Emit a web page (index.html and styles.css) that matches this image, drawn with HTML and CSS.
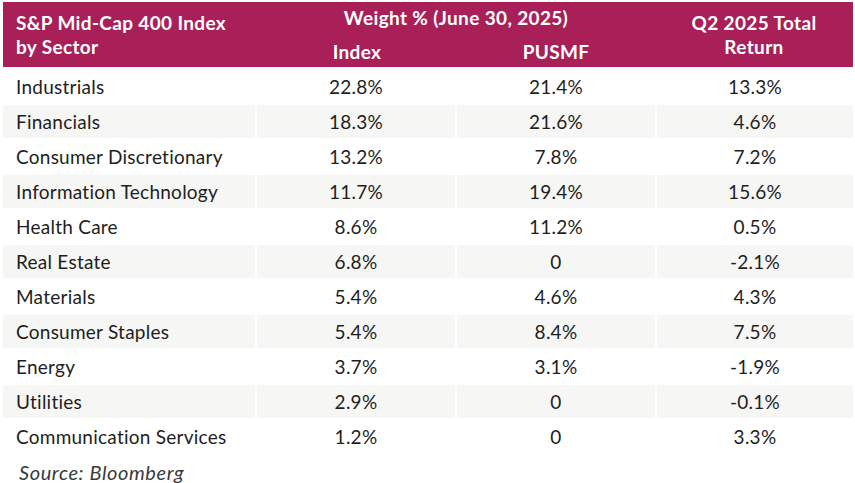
FILE: index.html
```html
<!DOCTYPE html>
<html>
<head>
<meta charset="utf-8">
<link rel="stylesheet" href="styles.css">
</head>
<body>
<div class="wrap">
  <div class="head">
    <div class="h-sector">S&amp;P Mid-Cap 400 Index<br>by Sector</div>
    <div class="h-weight">Weight % (June 30, 2025)</div>
    <div class="h-index">Index</div>
    <div class="h-pusmf">PUSMF</div>
    <div class="h-return">Q2 2025 Total<br>Return</div>
  </div>
  <div class="body">
    <div class="row"><div class="c name">Industrials</div><div class="c">22.8%</div><div class="c">21.4%</div><div class="c">13.3%</div></div>
    <div class="row alt"><div class="c name">Financials</div><div class="c">18.3%</div><div class="c">21.6%</div><div class="c">4.6%</div></div>
    <div class="row"><div class="c name">Consumer Discretionary</div><div class="c">13.2%</div><div class="c">7.8%</div><div class="c">7.2%</div></div>
    <div class="row alt"><div class="c name">Information Technology</div><div class="c">11.7%</div><div class="c">19.4%</div><div class="c">15.6%</div></div>
    <div class="row"><div class="c name">Health Care</div><div class="c">8.6%</div><div class="c">11.2%</div><div class="c">0.5%</div></div>
    <div class="row alt"><div class="c name">Real Estate</div><div class="c">6.8%</div><div class="c">0</div><div class="c">-2.1%</div></div>
    <div class="row"><div class="c name">Materials</div><div class="c">5.4%</div><div class="c">4.6%</div><div class="c">4.3%</div></div>
    <div class="row alt"><div class="c name">Consumer Staples</div><div class="c">5.4%</div><div class="c">8.4%</div><div class="c">7.5%</div></div>
    <div class="row"><div class="c name">Energy</div><div class="c">3.7%</div><div class="c">3.1%</div><div class="c">-1.9%</div></div>
    <div class="row alt"><div class="c name">Utilities</div><div class="c">2.9%</div><div class="c">0</div><div class="c">-0.1%</div></div>
    <div class="row"><div class="c name">Communication Services</div><div class="c">1.2%</div><div class="c">0</div><div class="c">3.3%</div></div>
  </div>
  <div class="source">Source: Bloomberg</div>
</div>
</body>
</html>
```
FILE: styles.css
```css
html, body {
  margin: 0;
  padding: 0;
  background: #ffffff;
}
body {
  font-family: Lato, "Noto Sans", sans-serif;
  color: #1e1e1e;
}
.wrap {
  padding: 2px 2px 0 3px;
  width: 850px;
}
.head {
  display: grid;
  grid-template-columns: 254px 200px 198px 198px;
  grid-template-rows: 33px 32px;
  background: #a91f57;
  color: #ffffff;
  font-weight: 700;
  font-size: 19px;
  letter-spacing: 0.35px;
  line-height: 24px;
  height: 65px;
  margin-bottom: 3px;
}
.h-sector {
  grid-column: 1;
  grid-row: 1 / 3;
  padding: 9px 0 0 13px;
}
.h-weight {
  grid-column: 2 / 4;
  grid-row: 1;
  text-align: center;
  padding-top: 4px;
}
.h-index {
  grid-column: 2;
  grid-row: 2;
  text-align: center;
  padding-top: 5px;
}
.h-pusmf {
  grid-column: 3;
  grid-row: 2;
  text-align: center;
  padding-top: 5px;
}
.h-return {
  grid-column: 4;
  grid-row: 1 / 3;
  text-align: center;
  padding-top: 9px;
}
.body {
  display: flex;
  flex-direction: column;
  gap: 2px;
}
.row {
  display: grid;
  grid-template-columns: 252px 198px 198px 196px;
  column-gap: 2px;
  height: 33px;
}
.c {
  display: flex;
  align-items: center;
  justify-content: center;
  font-size: 19px;
  letter-spacing: 0.25px;
  font-weight: 400;
}
.c.name {
  justify-content: flex-start;
  padding-left: 13px;
}
.row.alt .c {
  background: #f6f6f4;
}
.source {
  font-style: italic;
  font-size: 20px;
  letter-spacing: 0.6px;
  color: #3a3a3a;
  padding: 7px 0 0 16px;
}
```
